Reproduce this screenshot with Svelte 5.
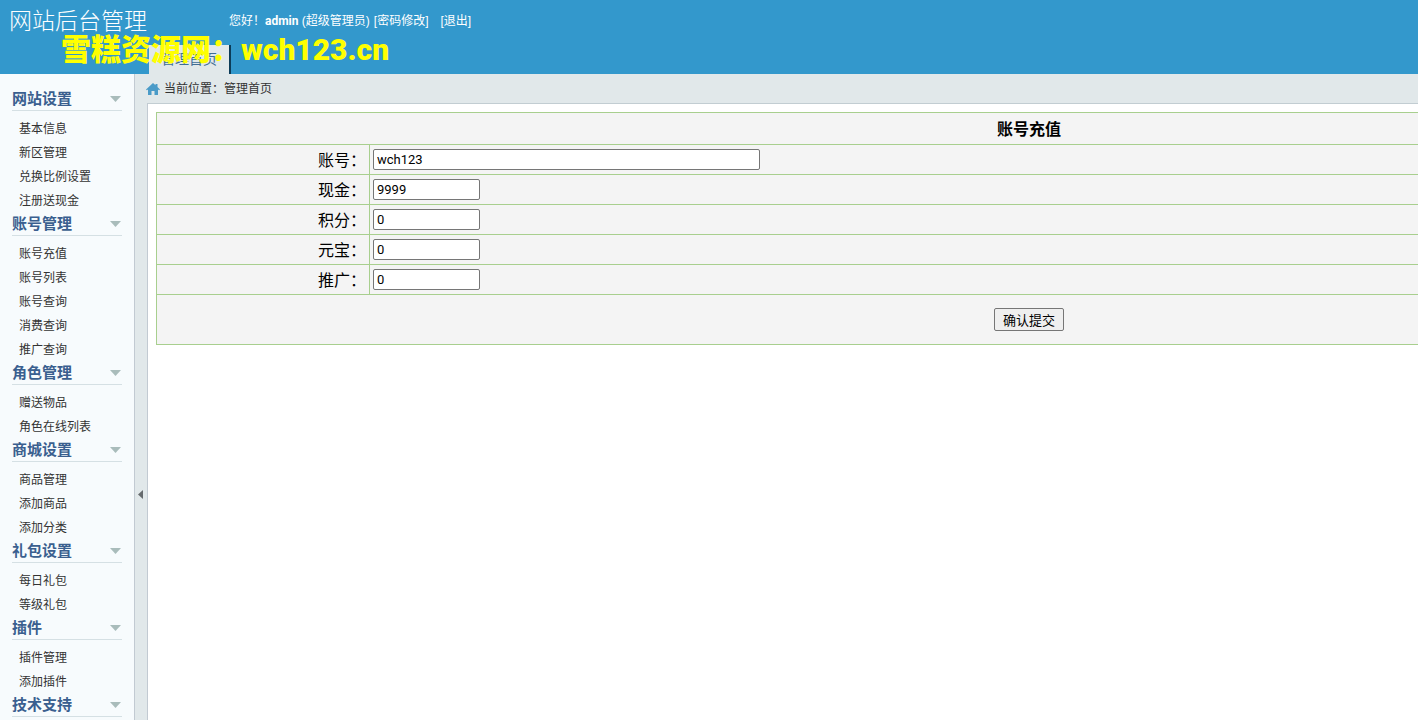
<script lang="ts">
  interface MenuGroup {
    title: string;
    items: string[];
    open: boolean;
  }

  let groups: MenuGroup[] = $state([
    { title: '网站设置', items: ['基本信息', '新区管理', '兑换比例设置', '注册送现金'], open: true },
    { title: '账号管理', items: ['账号充值', '账号列表', '账号查询', '消费查询', '推广查询'], open: true },
    { title: '角色管理', items: ['赠送物品', '角色在线列表'], open: true },
    { title: '商城设置', items: ['商品管理', '添加商品', '添加分类'], open: true },
    { title: '礼包设置', items: ['每日礼包', '等级礼包'], open: true },
    { title: '插件', items: ['插件管理', '添加插件'], open: true },
    { title: '技术支持', items: [], open: true }
  ]);

  let fields = $state([
    { id: 'account', label: '账号：', value: 'wch123', wide: true },
    { id: 'cash', label: '现金：', value: '9999', wide: false },
    { id: 'points', label: '积分：', value: '0', wide: false },
    { id: 'gold', label: '元宝：', value: '0', wide: false },
    { id: 'promo', label: '推广：', value: '0', wide: false }
  ]);

  let sidebarOpen = $state(true);

  function submitForm(event: Event): void {
    event.preventDefault();
  }
</script>

<div class="app">
  <header class="header">
    <div class="brand">网站后台管理</div>
    <div class="header-main">
      <div class="user">
        <span>您好！<b>admin</b> (超级管理员)</span>
        <a href="#password">[密码修改]</a>
        <a href="#logout" class="logout">[退出]</a>
      </div>
      <nav class="tabs">
        <a href="#home" class="tab">管理首页</a>
      </nav>
    </div>
    <div class="banner">雪糕资源网：<span class="site">wch123.cn</span></div>
  </header>

  <div class="layout">
    {#if sidebarOpen}
      <aside class="sidebar">
        {#each groups as group}
          <button type="button" class="group-title" onclick={() => (group.open = !group.open)}>
            {group.title}
            <svg width="11" height="8" viewBox="0 0 11 8"><path d="M0 2h11L5.500 8z" fill="#a9bcbb" /></svg>
          </button>
          {#if group.open}
            <ul>
              {#each group.items as item}
                <li><a href="#menu">{item}</a></li>
              {/each}
            </ul>
          {/if}
        {/each}
      </aside>
    {/if}

    <main class="content">
      <div class="crumbs">
        <svg width="14" height="12" viewBox="0 0 14 12">
          <path d="M7 0l2.500 2.300V1h2v3.100L14 6.500l-.8.8L12 6.400V12H8.500V8h-3v4H2V6.400l-1.200.9-.8-.8z" fill="#4a9bc8" />
        </svg>
        <span>当前位置：管理首页</span>
      </div>

      <div class="body">
        <button type="button" class="splitter" aria-label="收起菜单" onclick={() => (sidebarOpen = !sidebarOpen)}>
          <svg width="5" height="9" viewBox="0 0 5 9"><path d="M5 0v9L0 4.500z" fill="#666b6e" /></svg>
        </button>

        <form class="panel" onsubmit={submitForm}>
          <table>
            <thead>
              <tr><th colspan="2">账号充值</th></tr>
            </thead>
            <tbody>
              {#each fields as field}
                <tr>
                  <td class="label"><label for={field.id}>{field.label}</label></td>
                  <td><input id={field.id} type="text" class:wide={field.wide} bind:value={field.value} /></td>
                </tr>
              {/each}
              <tr>
                <td colspan="2" class="actions"><button type="submit">确认提交</button></td>
              </tr>
            </tbody>
          </table>
        </form>
      </div>
    </main>
  </div>
</div>

<style>
  :global(body) {
    background: #fff;
    font-family: "Liberation Sans", "Noto Sans CJK SC", sans-serif;
    font-size: 12px;
    color: #333;
  }

  .app {
    height: 100vh;
    overflow: hidden;
  }

  a {
    color: inherit;
    text-decoration: none;
  }

  button {
    font-family: inherit;
    cursor: pointer;
  }

  /* Header */
  .header {
    position: relative;
    display: flex;
    height: 74px;
    background: #3398cc;
    color: #fff;
  }

  .brand {
    box-sizing: border-box;
    width: 149px;
    padding: 4px 0 0 9px;
    font-size: 23px;
    font-weight: 300;
    line-height: 34px;
    white-space: nowrap;
  }

  .header-main {
    flex: 1;
    display: flex;
    flex-direction: column;
    justify-content: space-between;
  }

  .user {
    display: flex;
    gap: 4px;
    padding: 11px 0 0 80px;
    line-height: 20px;
  }

  .user b {
    font-family: Roboto, sans-serif;
  }

  .logout {
    margin-left: 8px;
  }

  .tabs {
    display: flex;
  }

  .tab {
    padding: 0 12px;
    background: #e1e8ea;
    border-right: 2px solid #0c3c58;
    color: #3f6d95;
    font-size: 14px;
    line-height: 29px;
  }

  .banner {
    position: absolute;
    left: 61px;
    top: 27px;
    color: #ff0;
    font-family: "Noto Sans CJK SC", sans-serif;
    font-size: 30px;
    font-weight: 900;
    line-height: 40px;
    white-space: nowrap;
  }

  .site {
    font-family: Roboto, sans-serif;
  }

  /* Sidebar */
  .layout {
    display: flex;
    min-height: 811px;
  }

  .sidebar {
    flex: none;
    box-sizing: border-box;
    width: 134px;
    padding: 13px 12px 0;
    background: #f7fbfd;
  }

  .group-title {
    display: flex;
    align-items: center;
    justify-content: space-between;
    width: 110px;
    height: 24px;
    margin-bottom: 6px;
    padding: 0 1px 2px 0;
    border: 0;
    border-bottom: 1px solid #d5e0e4;
    background: none;
    color: #3a5f8f;
    font-size: 15px;
    font-weight: bold;
  }

  ul {
    margin: 0 0 -1px;
    padding: 0 0 0 7px;
    list-style: none;
  }

  li {
    line-height: 24px;
    white-space: nowrap;
  }

  /* Content */
  .content {
    flex: 1;
    min-width: 0;
    display: flex;
    flex-direction: column;
    border-left: 1px solid #c2cad2;
    background: #e1e8ea;
  }

  .crumbs {
    display: flex;
    align-items: center;
    gap: 4px;
    height: 29px;
    padding-left: 11px;
    line-height: 20px;
  }

  .body {
    flex: 1;
    display: flex;
  }

  .splitter {
    flex: none;
    width: 12px;
    padding: 0 0 0 3px;
    border: 0;
    background: none;
    text-align: left;
  }

  .splitter svg {
    display: block;
  }

  .panel {
    flex: 1;
    min-width: 0;
    padding: 8px;
    border-top: 1px solid #c2cdd2;
    border-left: 1px solid #c2cad2;
    background: #fff;
    overflow: hidden;
  }

  table {
    width: 100%;
    min-width: 1746px;
    border-collapse: collapse;
    background: #f4f4f4;
    color: #000;
    font-size: 16px;
  }

  th,
  td {
    box-sizing: border-box;
    height: 30px;
    padding: 0 3px;
    border: 1px solid #a8cf8e;
    line-height: 20px;
  }

  th {
    height: 32px;
    padding-top: 2px;
  }

  .label {
    width: 213px;
    padding-top: 2px;
    text-align: right;
  }

  input {
    display: block;
    box-sizing: border-box;
    width: 107px;
    height: 21px;
    padding: 1px 3px;
    border: 1px solid #767676;
    border-radius: 2px;
    background: #fff;
    color: #000;
    font-family: Roboto, sans-serif;
    font-size: 13px;
  }

  input.wide {
    width: 387px;
  }

  .actions {
    height: 50px;
    text-align: center;
  }

  .actions button {
    height: 23px;
    padding: 0 8px;
    border: 1px solid #767676;
    border-radius: 2px;
    background: #efefef;
    color: #000;
    font-size: 13px;
  }
</style>
